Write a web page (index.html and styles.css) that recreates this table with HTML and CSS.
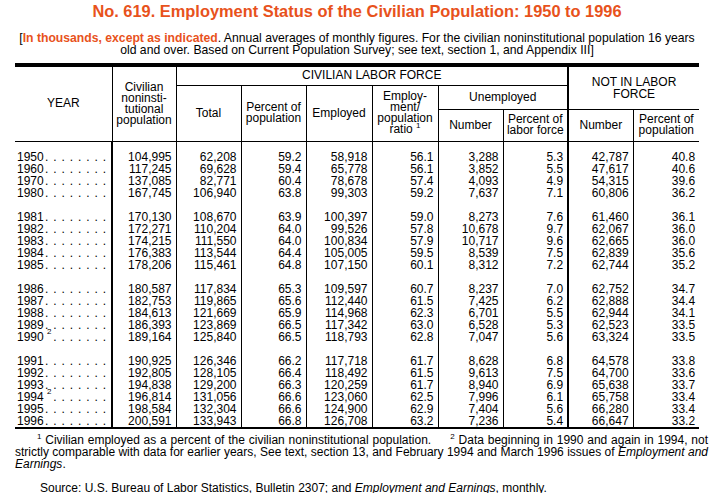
FILE: index.html
```html
<!DOCTYPE html>
<html>
<head>
<meta charset="utf-8">
<link rel="stylesheet" href="styles.css">
</head>
<body>
<div class="page">
  <h1 class="title">No. 619. Employment Status of the Civilian Population: 1950 to 1996</h1>
  <p class="sub">[<span class="hl">In thousands, except as indicated</span>. Annual averages of monthly figures. For the civilian noninstitutional population 16 years<br>old and over. Based on Current Population Survey; see text, section 1, and Appendix III]</p>
  <table class="tbl">
    <colgroup>
      <col class="c-year"><col class="c-civ"><col class="c-n"><col class="c-n"><col class="c-w"><col class="c-w"><col class="c-n"><col class="c-n"><col class="c-n"><col class="c-w">
    </colgroup>
    <thead>
      <tr class="h1">
        <th rowspan="3" class="first">YEAR</th>
        <th rowspan="3">Civilian<br>noninsti-<br>tutional<br>population</th>
        <th colspan="6">CIVILIAN LABOR FORCE</th>
        <th colspan="2" rowspan="2" class="major nilf">NOT IN LABOR<br>FORCE</th>
      </tr>
      <tr class="h2">
        <th rowspan="2">Total</th>
        <th rowspan="2">Percent of<br>population</th>
        <th rowspan="2">Employed</th>
        <th rowspan="2" class="ratio">Employ-<br>ment/<br>population<br>ratio <sup>1</sup></th>
        <th colspan="2">Unemployed</th>
      </tr>
      <tr class="h3">
        <th>Number</th>
        <th>Percent of<br>labor force</th>
        <th class="major">Number</th>
        <th>Percent of<br>population</th>
      </tr>
    </thead>
    <tbody>
      <tr class="pad"><td></td><td></td><td></td><td></td><td></td><td></td><td></td><td></td><td class="major"></td><td></td></tr>
      <tr><td class="yr"><div class="yw"><span>1950</span><span class="dots">. . . . . . . .</span></div></td><td>104,995</td><td>62,208</td><td>59.2</td><td>58,918</td><td>56.1</td><td>3,288</td><td>5.3</td><td class="major">42,787</td><td>40.8</td></tr>
      <tr><td class="yr"><div class="yw"><span>1960</span><span class="dots">. . . . . . . .</span></div></td><td>117,245</td><td>69,628</td><td>59.4</td><td>65,778</td><td>56.1</td><td>3,852</td><td>5.5</td><td class="major">47,617</td><td>40.6</td></tr>
      <tr><td class="yr"><div class="yw"><span>1970</span><span class="dots">. . . . . . . .</span></div></td><td>137,085</td><td>82,771</td><td>60.4</td><td>78,678</td><td>57.4</td><td>4,093</td><td>4.9</td><td class="major">54,315</td><td>39.6</td></tr>
      <tr><td class="yr"><div class="yw"><span>1980</span><span class="dots">. . . . . . . .</span></div></td><td>167,745</td><td>106,940</td><td>63.8</td><td>99,303</td><td>59.2</td><td>7,637</td><td>7.1</td><td class="major">60,806</td><td>36.2</td></tr>
      <tr class="gap"><td></td><td></td><td></td><td></td><td></td><td></td><td></td><td></td><td class="major"></td><td></td></tr>
      <tr><td class="yr"><div class="yw"><span>1981</span><span class="dots">. . . . . . . .</span></div></td><td>170,130</td><td>108,670</td><td>63.9</td><td>100,397</td><td>59.0</td><td>8,273</td><td>7.6</td><td class="major">61,460</td><td>36.1</td></tr>
      <tr><td class="yr"><div class="yw"><span>1982</span><span class="dots">. . . . . . . .</span></div></td><td>172,271</td><td>110,204</td><td>64.0</td><td>99,526</td><td>57.8</td><td>10,678</td><td>9.7</td><td class="major">62,067</td><td>36.0</td></tr>
      <tr><td class="yr"><div class="yw"><span>1983</span><span class="dots">. . . . . . . .</span></div></td><td>174,215</td><td>111,550</td><td>64.0</td><td>100,834</td><td>57.9</td><td>10,717</td><td>9.6</td><td class="major">62,665</td><td>36.0</td></tr>
      <tr><td class="yr"><div class="yw"><span>1984</span><span class="dots">. . . . . . . .</span></div></td><td>176,383</td><td>113,544</td><td>64.4</td><td>105,005</td><td>59.5</td><td>8,539</td><td>7.5</td><td class="major">62,839</td><td>35.6</td></tr>
      <tr><td class="yr"><div class="yw"><span>1985</span><span class="dots">. . . . . . . .</span></div></td><td>178,206</td><td>115,461</td><td>64.8</td><td>107,150</td><td>60.1</td><td>8,312</td><td>7.2</td><td class="major">62,744</td><td>35.2</td></tr>
      <tr class="gap"><td></td><td></td><td></td><td></td><td></td><td></td><td></td><td></td><td class="major"></td><td></td></tr>
      <tr><td class="yr"><div class="yw"><span>1986</span><span class="dots">. . . . . . . .</span></div></td><td>180,587</td><td>117,834</td><td>65.3</td><td>109,597</td><td>60.7</td><td>8,237</td><td>7.0</td><td class="major">62,752</td><td>34.7</td></tr>
      <tr><td class="yr"><div class="yw"><span>1987</span><span class="dots">. . . . . . . .</span></div></td><td>182,753</td><td>119,865</td><td>65.6</td><td>112,440</td><td>61.5</td><td>7,425</td><td>6.2</td><td class="major">62,888</td><td>34.4</td></tr>
      <tr><td class="yr"><div class="yw"><span>1988</span><span class="dots">. . . . . . . .</span></div></td><td>184,613</td><td>121,669</td><td>65.9</td><td>114,968</td><td>62.3</td><td>6,701</td><td>5.5</td><td class="major">62,944</td><td>34.1</td></tr>
      <tr><td class="yr"><div class="yw"><span>1989</span><span class="dots">. . . . . . . .</span></div></td><td>186,393</td><td>123,869</td><td>66.5</td><td>117,342</td><td>63.0</td><td>6,528</td><td>5.3</td><td class="major">62,523</td><td>33.5</td></tr>
      <tr><td class="yr"><div class="yw"><span>1990 <sup class="fn">2</sup></span><span class="dots">. . . . . . .</span></div></td><td>189,164</td><td>125,840</td><td>66.5</td><td>118,793</td><td>62.8</td><td>7,047</td><td>5.6</td><td class="major">63,324</td><td>33.5</td></tr>
      <tr class="gap"><td></td><td></td><td></td><td></td><td></td><td></td><td></td><td></td><td class="major"></td><td></td></tr>
      <tr><td class="yr"><div class="yw"><span>1991</span><span class="dots">. . . . . . . .</span></div></td><td>190,925</td><td>126,346</td><td>66.2</td><td>117,718</td><td>61.7</td><td>8,628</td><td>6.8</td><td class="major">64,578</td><td>33.8</td></tr>
      <tr><td class="yr"><div class="yw"><span>1992</span><span class="dots">. . . . . . . .</span></div></td><td>192,805</td><td>128,105</td><td>66.4</td><td>118,492</td><td>61.5</td><td>9,613</td><td>7.5</td><td class="major">64,700</td><td>33.6</td></tr>
      <tr><td class="yr"><div class="yw"><span>1993</span><span class="dots">. . . . . . . .</span></div></td><td>194,838</td><td>129,200</td><td>66.3</td><td>120,259</td><td>61.7</td><td>8,940</td><td>6.9</td><td class="major">65,638</td><td>33.7</td></tr>
      <tr><td class="yr"><div class="yw"><span>1994 <sup class="fn">2</sup></span><span class="dots">. . . . . . .</span></div></td><td>196,814</td><td>131,056</td><td>66.6</td><td>123,060</td><td>62.5</td><td>7,996</td><td>6.1</td><td class="major">65,758</td><td>33.4</td></tr>
      <tr><td class="yr"><div class="yw"><span>1995</span><span class="dots">. . . . . . . .</span></div></td><td>198,584</td><td>132,304</td><td>66.6</td><td>124,900</td><td>62.9</td><td>7,404</td><td>5.6</td><td class="major">66,280</td><td>33.4</td></tr>
      <tr><td class="yr"><div class="yw"><span>1996</span><span class="dots">. . . . . . . .</span></div></td><td>200,591</td><td>133,943</td><td>66.8</td><td>126,708</td><td>63.2</td><td>7,236</td><td>5.4</td><td class="major">66,647</td><td>33.2</td></tr>
    </tbody>
  </table>
  <p class="notes"><sup>1</sup> Civilian employed as a percent of the civilian noninstitutional population.&nbsp;&nbsp;&nbsp;&nbsp; <sup>2</sup> Data beginning in 1990 and again in 1994, not strictly comparable with data for earlier years, See text, section 13, and February 1994 and March 1996 issues of <i>Employment and Earnings</i>.</p>
  <p class="source">Source: U.S. Bureau of Labor Statistics, Bulletin 2307; and <i>Employment and Earnings</i>, monthly.</p>
</div>
</body>
</html>
```

FILE: styles.css
```css
html, body {
  margin: 0;
  padding: 0;
  background: #fff;
}
body {
  font-family: "Liberation Sans", Arial, Helvetica, sans-serif;
  font-size: 12px;
  color: #000;
}
.page {
  width: 693px;
  padding: 0 11px 0 15px;
}
.title {
  margin: 0;
  padding-top: 1px;
  font-family: "Liberation Sans Narrow", "Arial Narrow", "Liberation Sans", sans-serif;
  font-weight: bold;
  font-size: 16.4px;
  line-height: 20px;
  color: #e8521c;
  text-align: center;
  width: 684px;
}
.sub {
  margin: 11px 0 0;
  width: 684px;
  text-align: center;
  font-size: 12.2px;
  line-height: 12px;
}
.hl {
  color: #e8521c;
  font-weight: bold;
}
.tbl {
  margin-top: 7px;
  width: 684px;
  table-layout: fixed;
  border-collapse: collapse;
  border-top: 4px solid #000;
  border-bottom: 2px solid #000;
}
.c-year { width: 97px; }
.c-civ { width: 64px; }
.c-n { width: 65px; }
.c-w { width: 66px; }
.tbl th {
  font-weight: normal;
  font-size: 12px;
  line-height: 11px;
  text-align: center;
  vertical-align: middle;
  padding: 0;
  border-left: 1px solid #000;
  border-bottom: 1px solid #000;
}
.tbl th.nilf { line-height: 12px; }
.tbl th.first { border-left: 0; }
.tbl th.major, .tbl td.major { border-left: 2px solid #000; }
.tbl .h1 { height: 20px; }
.tbl .h2 { height: 24px; }
.tbl .h3 { height: 32px; }
.tbl th sup, .notes sup {
  font-size: 8px;
  line-height: 0;
  vertical-align: 5px;
}
.tbl td {
  padding: 0 4px 0 0;
  text-align: right;
  line-height: 12px;
  height: 12px;
  border-left: 1px solid #000;
  white-space: nowrap;
}
.tbl td:first-child { border-left: 0; }
.tbl td:nth-child(2) { border-left: 2px solid #000; }
.tbl tr.pad td { height: 9px; line-height: 9px; }
.tbl tr.gap td { height: 12px; }
.tbl td.yr {
  text-align: left;
  padding: 0 4px 0 2px;
}
.yw {
  display: flex;
  justify-content: space-between;
}
.dots {
  letter-spacing: 0.8px;
}
.fn {
  font-size: 8px;
  line-height: 0;
  vertical-align: 7px;
}
.notes {
  margin: 5px 0 0;
  text-indent: 22px;
  text-align: justify;
  line-height: 12px;
}
.source {
  margin: 12px 0 0;
  text-indent: 25px;
  line-height: 12px;
}
```
